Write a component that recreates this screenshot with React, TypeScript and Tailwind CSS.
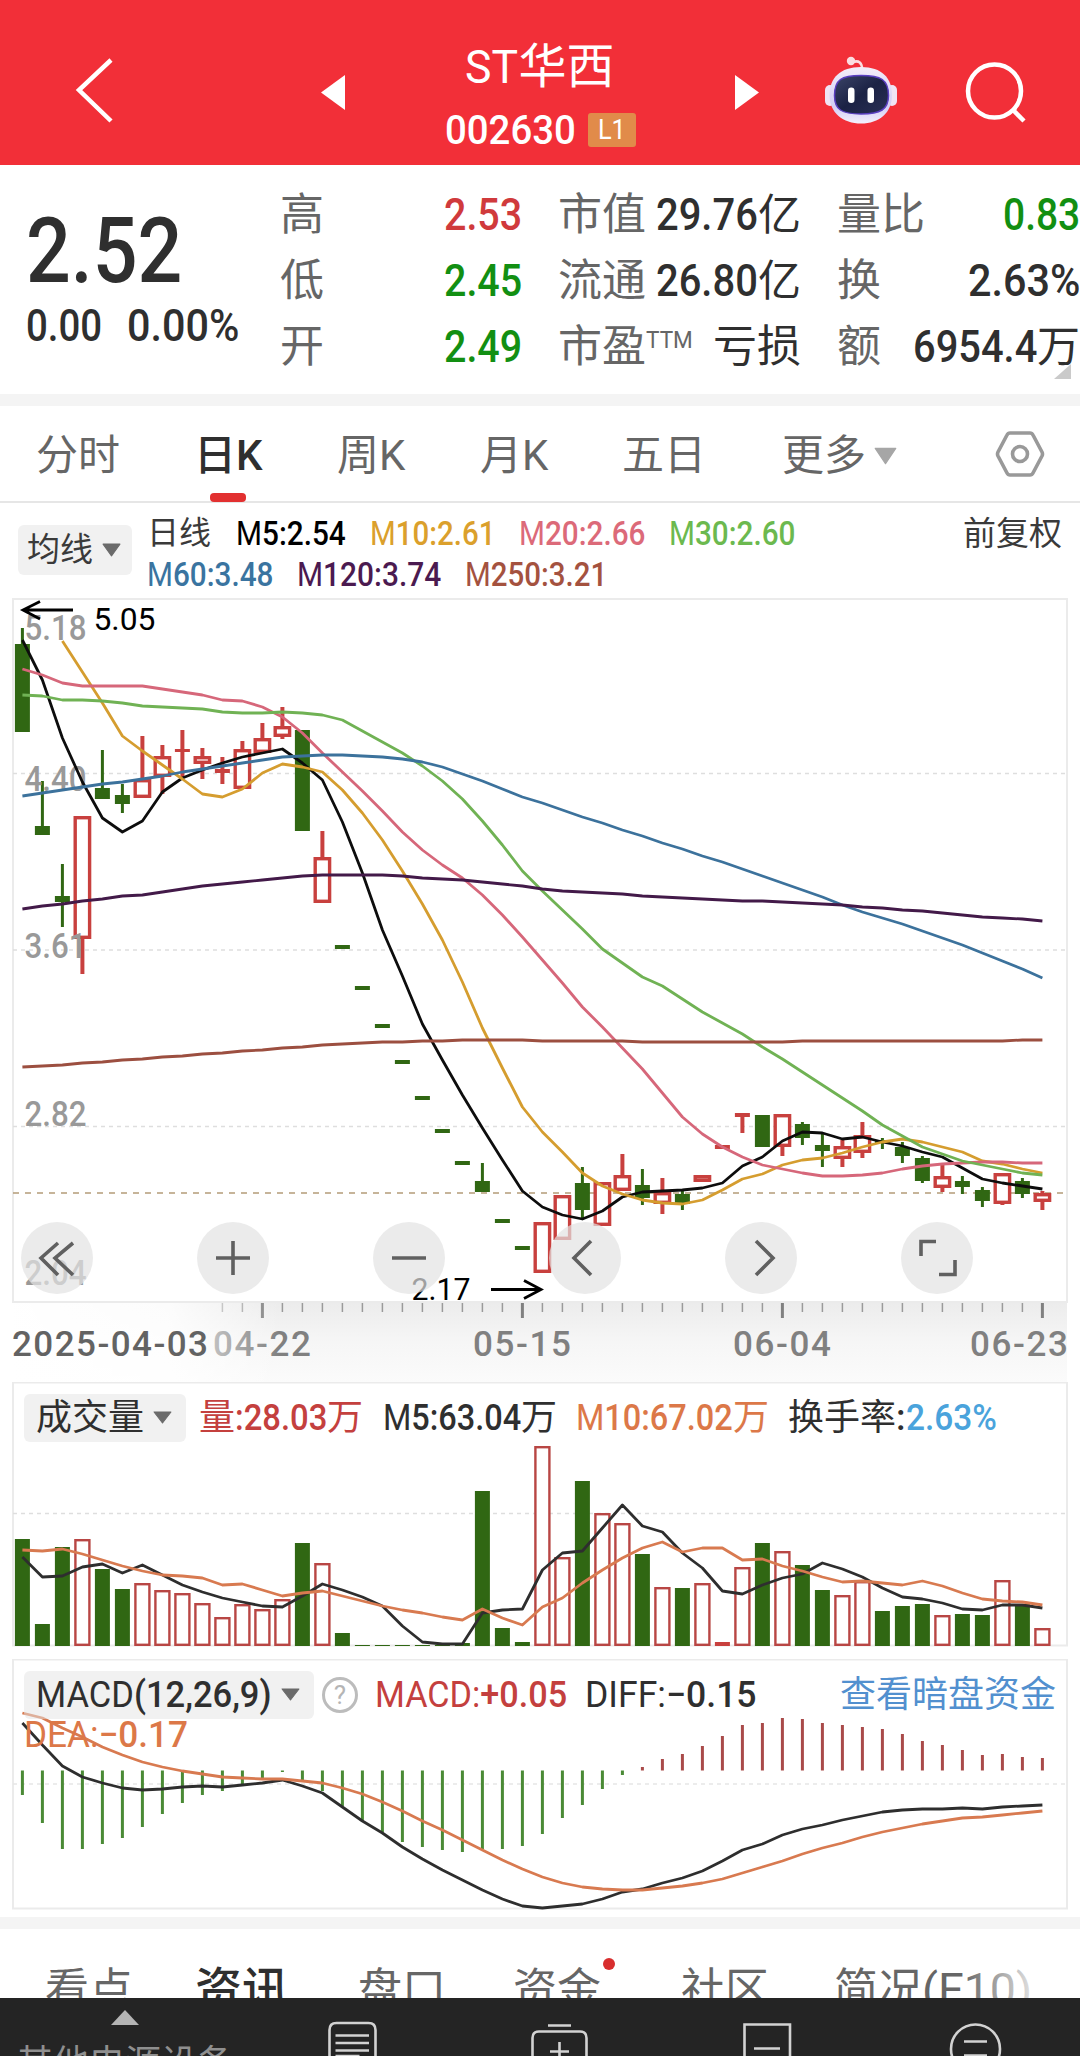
import { useLayoutEffect, useRef, useState } from "react";
import type { ReactNode } from "react";

type Candle = {
  up: boolean;
  top: number;
  bottom: number;
  high?: number;
  low?: number;
};

const STEP = 20;
const FIRST_X = 22.4;
const xAt = (i: number) => FIRST_X + i * STEP;

const g = (top: number, bottom: number, high?: number, low?: number): Candle => ({ up: false, top, bottom, high, low });
const r = (top: number, bottom: number, high?: number, low?: number): Candle => ({ up: true, top, bottom, high, low });

const candles: Candle[] = [
  g(644, 732, 628), g(826, 835, 781), g(896, 902, 864, 927), r(816, 939, undefined, 974),
  g(788, 799, 750), g(795, 804, 784, 813), r(779, 798, 736), r(756, 777, 745, 794),
  r(749, 752, 730, 777), r(756, 764, 748, 779), r(769, 773, 757, 784), r(749, 789, 741),
  r(738, 753, 723), r(726, 737, 707, 739), g(730, 831), r(857, 903, 831),
  g(945, 949), g(986, 990), g(1024, 1028), g(1060, 1064), g(1096, 1100), g(1129, 1133), g(1161, 1165),
  g(1181, 1192, 1163), g(1219, 1223), g(1246, 1250), r(1222, 1273), r(1195, 1240),
  g(1183, 1210, 1167, 1218), r(1182, 1226), r(1175, 1191, 1154), g(1185, 1198, 1169, 1205),
  r(1192, 1204, 1178, 1214), g(1194, 1204, 1190, 1210), r(1175, 1182), r(1145, 1149),
  r(1113, 1117, undefined, 1133), g(1115, 1147), r(1114, 1147, undefined, 1156), g(1124, 1138, 1122, 1145),
  g(1145, 1151, 1134, 1167), r(1146, 1159, 1140, 1167), r(1135, 1153, 1122, 1158), g(1140, 1143, 1138, 1149),
  g(1147, 1156, 1142, 1163), g(1158, 1181, 1156, 1183), r(1176, 1188, 1165, 1192), g(1181, 1187, 1176, 1194),
  g(1190, 1201, 1187, 1207), r(1173, 1204, undefined, 1205), g(1181, 1194, 1178, 1198), r(1193, 1202, 1191, 1210),
];

const ma5 = [
  640, 680, 738, 782, 818, 832, 821, 792, 778, 770, 763, 757, 753, 749, 763, 780, 822, 873, 930, 976, 1024, 1060, 1095,
  1128, 1160, 1191, 1207, 1215, 1219, 1211, 1197, 1192, 1191, 1190, 1188, 1183, 1166, 1157, 1141, 1132, 1133, 1139,
  1137, 1142, 1146, 1152, 1157, 1168, 1179, 1183, 1186, 1189,
];
const ma10 = [
  641, 672, 703, 736, 751, 765, 779, 794, 797, 789, 773, 764, 767, 772, 790, 813, 840, 871, 904, 940, 982, 1028, 1068,
  1107, 1132, 1152, 1173, 1186, 1194, 1200, 1203, 1204, 1200, 1190, 1179, 1174, 1165, 1160, 1158, 1153, 1147, 1142,
  1139, 1142, 1147, 1152, 1161, 1164, 1169, 1173,
];
const ma20 = [
  669, 675, 683, 686, 686, 686, 686, 689, 692, 695, 700, 701, 707, 717, 733, 753, 772, 791, 811, 832, 850, 865, 878,
  895, 915, 937, 960, 983, 1007, 1027, 1048, 1069, 1093, 1117, 1134, 1147, 1157, 1165, 1169, 1173, 1176, 1176, 1175,
  1173, 1169, 1166, 1164, 1163, 1162, 1162, 1163, 1163,
];
const ma30 = [
  695, 696, 700, 700, 701, 703, 706, 707, 708, 709, 712, 713, 713, 712, 713, 715, 720, 731, 742, 753, 766, 781, 799,
  821, 845, 871, 891, 910, 929, 949, 963, 977, 986, 999, 1012, 1023, 1034, 1047, 1059, 1072, 1085, 1098, 1111, 1125,
  1136, 1147, 1154, 1161, 1165, 1169, 1173, 1175,
];
const ma60 = [
  796, 793, 790, 787, 784, 782, 779, 776, 772, 769, 766, 763, 760, 757, 756, 755, 755, 756, 757, 759, 762, 767, 774,
  781, 789, 797, 803, 810, 817, 823, 830, 836, 843, 849, 856, 862, 869, 876, 883, 890, 897, 905, 912, 918, 924, 931,
  938, 945, 953, 961, 969, 978,
];
const ma120 = [
  909, 906, 904, 901, 899, 896, 895, 892, 889, 886, 884, 882, 880, 878, 876, 875, 875, 875, 875, 876, 878, 879, 880,
  882, 884, 886, 889, 891, 892, 893, 894, 896, 897, 898, 899, 900, 901, 901, 902, 903, 904, 905, 907, 908, 910, 911,
  913, 915, 917, 918, 919, 921,
];
const ma250 = [
  1067, 1066, 1065, 1063, 1062, 1060, 1059, 1057, 1056, 1054, 1053, 1051, 1050, 1048, 1047, 1045, 1044, 1043, 1042,
  1042, 1041, 1041, 1040, 1040, 1040, 1040, 1041, 1041, 1041, 1041, 1041, 1042, 1042, 1042, 1042, 1042, 1042, 1042,
  1042, 1041, 1041, 1041, 1041, 1041, 1041, 1041, 1041, 1041, 1041, 1041, 1040, 1040,
];

const volumeTops = [
  1539, 1624, 1547, 1539, 1569, 1589, 1583, 1590, 1593, 1603, 1617, 1604, 1609, 1599, 1543, 1563, 1633, 1645, 1645,
  1645, 1645, 1645, 1643, 1491, 1628, 1642, 1446, 1557, 1481, 1513, 1523, 1554, 1587, 1588, 1583, 1642, 1567, 1543,
  1551, 1565, 1590, 1595, 1581, 1611, 1606, 1604, 1615, 1614, 1615, 1580, 1604, 1628,
];
const vol5 = [
  1557, 1577, 1576, 1567, 1564, 1573, 1565, 1575, 1585, 1592, 1598, 1602, 1606, 1607, 1596, 1584, 1590, 1597, 1606,
  1626, 1642, 1644, 1644, 1613, 1610, 1609, 1570, 1553, 1551, 1528, 1505, 1526, 1532, 1553, 1568, 1591, 1594, 1585,
  1578, 1574, 1563, 1569, 1577, 1588, 1597, 1599, 1603, 1609, 1610, 1605, 1605, 1608,
];
const vol10 = [
  1550, 1551, 1549, 1554, 1560, 1566, 1571, 1575, 1576, 1578, 1585, 1584, 1590, 1596, 1593, 1591, 1596, 1601, 1606,
  1610, 1613, 1617, 1620, 1609, 1618, 1625, 1607, 1598, 1583, 1570, 1558, 1548, 1542, 1552, 1548, 1548, 1560, 1559,
  1566, 1571, 1577, 1582, 1581, 1583, 1585, 1581, 1586, 1593, 1599, 1601, 1602, 1605,
];

const ZERO_Y = 1770.5;
const macdEnds = [
  1795, 1823, 1849, 1849, 1844, 1838, 1827, 1814, 1803, 1795, 1791, 1785, 1778, 1772, 1780, 1791, 1806, 1822, 1832,
  1842, 1847, 1850, 1852, 1849, 1849, 1846, 1834, 1818, 1805, 1789, 1775, 1767, 1759, 1754, 1746, 1736, 1725, 1723,
  1718, 1719, 1723, 1725, 1727, 1729, 1734, 1741, 1745, 1750, 1755, 1754, 1757, 1758,
];
const diff = [
  1723, 1745, 1766, 1777, 1783, 1788, 1790, 1789, 1787, 1786, 1787, 1785, 1783, 1780, 1786, 1793, 1807, 1821, 1833,
  1847, 1859, 1870, 1880, 1890, 1899, 1906, 1908, 1906, 1904, 1899, 1892, 1889, 1883, 1878, 1871, 1861, 1850, 1844,
  1835, 1829, 1825, 1820, 1816, 1812, 1810, 1809, 1809, 1808, 1809, 1807, 1806, 1805,
];
const dea = [
  1713, 1718, 1728, 1737, 1747, 1755, 1762, 1767, 1771, 1774, 1777, 1778, 1779, 1779, 1781, 1783, 1788, 1794, 1802,
  1811, 1821, 1830, 1840, 1850, 1860, 1869, 1877, 1883, 1887, 1889, 1890, 1890, 1888, 1886, 1883, 1879, 1873, 1867,
  1861, 1854, 1848, 1843, 1837, 1832, 1828, 1824, 1821, 1818, 1817, 1815, 1813, 1811,
];

const RED = "#c8403e";
const GREEN = "#306713";

// Condenses its text to the given width, the way a DIN face would set it.
function Fit({ w, className = "", children }: { w: number; className?: string; children: ReactNode }) {
  const ref = useRef<HTMLSpanElement>(null);
  const [scale, setScale] = useState(1);
  useLayoutEffect(() => {
    if (ref.current) setScale(w / ref.current.offsetWidth);
  }, [w]);
  return (
    <span className={`inline-block shrink-0 ${className}`} style={{ width: w }}>
      <span ref={ref} className="inline-block origin-left whitespace-nowrap" style={{ transform: `scaleX(${scale})` }}>
        {children}
      </span>
    </span>
  );
}

function Line({ data, color, from = 0, width = 2.8 }: { data: number[]; color: string; from?: number; width?: number }) {
  const points = data.map((y, i) => `${xAt(i + from)},${y}`).join(" ");
  return <polyline points={points} fill="none" stroke={color} strokeWidth={width} strokeLinejoin="round" />;
}

function Frame({ y, h }: { y: number; h: number }) {
  return <rect x="13" y={y} width="1054" height={h} fill="none" stroke="#ebebeb" strokeWidth="2" />;
}

function Grid({ y, color = "#dedede", dash = "4 4" }: { y: number; color?: string; dash?: string }) {
  return <line x1="13" x2="1066" y1={y} y2={y} stroke={color} strokeWidth="1.4" strokeDasharray={dash} />;
}

function Caret({ className }: { className: string }) {
  return (
    <svg viewBox="0 0 18 13" preserveAspectRatio="none" className={className}>
      <path d="M1 1h16L9 12z" fill="currentColor" stroke="currentColor" strokeLinejoin="round" />
    </svg>
  );
}

function Header() {
  return (
    <header className="flex h-[165px] bg-[#f22f38] text-white">
      <svg viewBox="0 0 345 165" className="h-[165px] w-[345px]">
        <path d="M111 60 79 90l32 31" fill="none" stroke="white" strokeWidth="4.500" />
        <path d="M345 75v35l-24-17.500z" fill="white" />
      </svg>
      <div className="flex w-[390px] flex-col items-center pt-[39px]">
        <div className="flex h-[56px] items-center text-[47px] leading-[56px]">
          <Fit w={53}>ST</Fit>
          <span className="text-[48px]">华西</span>
        </div>
        <div className="mt-[10px] flex h-[54px] items-center pb-1 text-[41px] leading-[50px] font-medium">
          <Fit w={131}>002630</Fit>
          <span className="ml-[12px] flex h-[34px] w-[48px] items-center justify-center rounded-[3px] bg-[#e18b4a] text-[28px] leading-none font-normal">
            <Fit w={28}>L1</Fit>
          </span>
        </div>
      </div>
      <svg viewBox="735 0 345 165" className="h-[165px] w-[345px]">
        <defs>
          <linearGradient id="head" x1="0" y1="0" x2="0" y2="1">
            <stop offset="0" stopColor="#f3edf8" />
            <stop offset="0.7" stopColor="#d3cdf5" />
            <stop offset="1" stopColor="#f4f0fc" />
          </linearGradient>
          <linearGradient id="visor" x1="0" y1="0" x2="1" y2="1">
            <stop offset="0" stopColor="#3b4468" />
            <stop offset="0.5" stopColor="#1b2244" />
            <stop offset="1" stopColor="#2a2f55" />
          </linearGradient>
        </defs>
        <path d="M735 75v35l24-17.500z" fill="white" />
        <path d="M853 62c6-2 9 1 9 7" fill="none" stroke="#fbdde0" strokeWidth="2.500" />
        <circle cx="851" cy="61" r="4.200" fill="#fbdde0" />
        <rect x="825" y="85" width="10" height="21" rx="5" fill="#f0e4f4" />
        <rect x="887" y="85" width="10" height="21" rx="5" fill="#f0e4f4" />
        <path d="M861 67c21 0 31 11 31 28 0 18-13 28.500-31 28.500S829.500 113 829.500 95C829.500 78 840 67 861 67z" fill="url(#head)" />
        <path
          d="M861 75.500c20 0 27.500 4 27.500 20 0 14-8 18.500-27.500 18.500s-26.500-4.500-26.500-18.500c0-16 7-20 26.500-20z"
          fill="url(#visor)"
          stroke="#5a3fc0"
          strokeWidth="1.500"
        />
        <rect x="848" y="87.500" width="6.500" height="15.500" rx="3.200" fill="white" />
        <rect x="867.500" y="87.500" width="6.500" height="15.500" rx="3.200" fill="white" />
        <circle cx="994.500" cy="91" r="26.500" fill="none" stroke="white" strokeWidth="4.500" />
        <path d="m1013 110 11 11" stroke="white" strokeWidth="4.500" />
      </svg>
    </header>
  );
}

function Cell({ label, children }: { label: ReactNode; children: ReactNode }) {
  return (
    <div className="flex items-center justify-between">
      <span className="text-[#666]">{label}</span>
      <span className="flex items-center text-[45px] font-medium text-[#2f2f2f]">{children}</span>
    </div>
  );
}

function Quote() {
  return (
    <section className="relative flex h-[229px] bg-white pt-[17px] text-[44px] leading-[66px]">
      <div className="w-[280px] pl-[26px] font-medium text-[#2f2f2f]">
        <div className="pt-[33px] text-[90px] leading-[74px]">
          <Fit w={156}>2.52</Fit>
        </div>
        <div className="flex pt-[4px] text-[45px]">
          <Fit w={76}>0.00</Fit>
          <Fit w={112} className="ml-[25px]">0.00%</Fit>
        </div>
      </div>
      <div className="w-[242px]">
        <Cell label="高"><Fit w={78} className="text-[#d03a3c]">2.53</Fit></Cell>
        <Cell label="低"><Fit w={78} className="text-[#128f12]">2.45</Fit></Cell>
        <Cell label="开"><Fit w={78} className="text-[#128f12]">2.49</Fit></Cell>
      </div>
      <div className="ml-[36px] w-[243px]">
        <Cell label="市值"><Fit w={102}>29.76</Fit><span className="text-[43px] font-normal">亿</span></Cell>
        <Cell label="流通"><Fit w={102}>26.80</Fit><span className="text-[43px] font-normal">亿</span></Cell>
        <Cell label={<>市盈<Fit w={47} className="relative -top-[14px] text-[24px] leading-none">TTM</Fit></>}>
          <span className="text-[44px] font-normal">亏损</span>
        </Cell>
      </div>
      <div className="ml-[36px] w-[243px]">
        <Cell label="量比"><Fit w={77} className="text-[#128f12]">0.83</Fit></Cell>
        <Cell label="换"><Fit w={112}>2.63%</Fit></Cell>
        <Cell label="额"><Fit w={124}>6954.4</Fit><span className="text-[43px] font-normal">万</span></Cell>
      </div>
      <svg viewBox="0 0 17 15" className="absolute top-[199px] left-[1054px] h-[15px] w-[17px]">
        <path d="M17 0v15H0z" fill="#cacaca" />
      </svg>
    </section>
  );
}

function PeriodTabs() {
  return (
    <nav className="flex h-[97px] items-start border-b-2 border-[#e6e6e6] bg-white pt-[20px] pl-[36px] text-[42px] leading-[60px] text-[#666]">
      <span className="w-[158px]">分时</span>
      <span className="relative w-[143px] font-medium text-[#2f2f2f]">
        日<Fit w={27}>K</Fit>
        <i className="absolute top-[67px] left-[16px] h-[9px] w-[36px] rounded-[4px] bg-[#e23030]" />
      </span>
      <span className="w-[143px]">周<Fit w={26}>K</Fit></span>
      <span className="w-[142px]">月<Fit w={26}>K</Fit></span>
      <span className="w-[160px]">五日</span>
      <span className="flex w-[213px] items-center">
        更多
        <Caret className="ml-[8px] h-[18px] w-[23px] text-[#a6a6a6]" />
      </span>
      <svg viewBox="0 0 50 46" className="mt-[5px] h-[46px] w-[50px]" fill="none" stroke="#999" strokeWidth="3.600">
        <path d="M15 2h20q2 0 3 2l9 17q1 2 0 4l-9 17q-1 2-3 2H15q-2 0-3-2L3 25q-1-2 0-4l9-17q1-2 3-2z" />
        <circle cx="25" cy="23" r="7.500" />
      </svg>
    </nav>
  );
}

const averages = [
  [
    { name: "M5", value: ":2.54", w: 110, color: "text-black" },
    { name: "M10", value: ":2.61", w: 125, color: "text-[#dba02c]" },
    { name: "M20", value: ":2.66", w: 126, color: "text-[#dc6a79]" },
    { name: "M30", value: ":2.60", w: 126, color: "text-[#6cb94f]" },
  ],
  [
    { name: "M60", value: ":3.48", w: 126, color: "text-[#3a74a0]" },
    { name: "M120", value: ":3.74", w: 144, color: "text-[#4b1a50]" },
    { name: "M250", value: ":3.21", w: 142, color: "text-[#a4523f]" },
  ],
];

function Average({ name, value, w, color }: { name: string; value: string; w: number; color: string }) {
  return (
    <Fit w={w} className={`font-medium ${color}`}>
      <span className="font-normal">M</span>
      {name.slice(1)}
      {value}
    </Fit>
  );
}

function AverageBar() {
  return (
    <div className="flex h-[95px] bg-white pt-[10px] pr-[18px] pl-[18px] text-[33px] text-[#3a3a3a]">
      <div className="mt-[12px] flex h-[50px] w-[114px] items-center rounded-[6px] bg-[#f1f1f1] pl-[9px] leading-[50px]">
        均线
        <Caret className="ml-[9px] h-[14px] w-[19px] text-[#6b6b6b]" />
      </div>
      <div className="ml-[15px] flex-1 text-[33px] leading-[41px]">
        <div className="flex gap-[24px]">
          <span className="w-[65px] text-[32px]">日线</span>
          {averages[0].map((a) => <Average key={a.name} {...a} />)}
        </div>
        <div className="flex gap-[24px]">
          {averages[1].map((a) => <Average key={a.name} {...a} />)}
        </div>
      </div>
      <span className="leading-[41px]">前复权</span>
    </div>
  );
}

function CandleShape({ c, i }: { c: Candle; i: number }) {
  const x = xAt(i);
  const color = c.up ? RED : GREEN;
  const h = c.bottom - c.top;
  return (
    <g stroke={color}>
      {c.high && <line x1={x} x2={x} y1={c.high} y2={c.top} strokeWidth={c.up ? 4 : 3} />}
      {c.low && <line x1={x} x2={x} y1={c.bottom} y2={c.low} strokeWidth={c.up ? 4 : 3} />}
      {c.up && h > 4 ? (
        <rect x={x - 7.2} y={c.top + 1.7} width="14.4" height={h - 3.4} fill="white" strokeWidth="3.400" />
      ) : (
        <rect x={x - 7.500} y={c.top} width="15" height={h} fill={color} stroke="none" />
      )}
    </g>
  );
}

const priceLabels = [
  { text: "5.18", y: 640 },
  { text: "4.40", y: 790.5 },
  { text: "3.61", y: 958 },
  { text: "2.82", y: 1126 },
  { text: "2.04", y: 1285 },
];

const tools = [
  "M37 21 20 36l17 17M52 21 34 36l18 17",
  "M19 36h34M36 19v34",
  "M19 36h34",
  "M42 19 25 36l17 17",
  "M31 19l17 17-17 17",
  "M20 34V19.500h15M54 38v14.500H38",
];

function PriceChart() {
  return (
    <div className="relative h-[705px] bg-white">
      <svg viewBox="0 598 1080 705" className="h-[705px] w-full">
        <Frame y={599} h={703} />
        <Grid y={773.5} />
        <Grid y={950} />
        <Grid y={1126.5} />
        <Grid y={1193} color="#b49c78" dash="6 6" />
        {candles.map((c, i) => <CandleShape key={i} c={c} i={i} />)}
        <g fill="#999" fontSize="35" fontWeight="500">
          {priceLabels.map((p) => (
            <text key={p.text} x="24.500" y={p.y} textLength="62" lengthAdjust="spacingAndGlyphs">{p.text}</text>
          ))}
        </g>
        <Line data={ma5} color="#0d0d0d" />
        <Line data={ma10} color="#d59d2f" from={2} />
        <Line data={ma20} color="#d6677a" />
        <Line data={ma30} color="#70b254" />
        <Line data={ma60} color="#3c729c" />
        <Line data={ma120} color="#431a49" />
        <Line data={ma250} color="#9c4f40" />
        <g fill="none" stroke="black" strokeWidth="2.800">
          <path d="M73 610H23M40 601.500 23 610l17 9" />
          <path d="M491 1289.500h50M524 1280.500l17 9-17 9" />
        </g>
        <g fill="black" fontSize="31">
          <text x="93.500" y="629.500" textLength="62" lengthAdjust="spacingAndGlyphs">5.05</text>
          <text x="411.500" y="1300" textLength="59" lengthAdjust="spacingAndGlyphs">2.17</text>
        </g>
      </svg>
      <div className="absolute top-[624px] left-[21px] flex gap-[104px]">
        {tools.map((d) => (
          <span key={d} className="h-[72px] w-[72px] rounded-full bg-[#e3e3e3]/70">
            <svg viewBox="0 0 72 72" fill="none" stroke="#606060" strokeWidth="3.600">
              <path d={d} />
            </svg>
          </span>
        ))}
      </div>
    </div>
  );
}

function DateAxis() {
  const ticks = Array.from({ length: 42 }, (_, i) => i + 10);
  return (
    <div className="h-[79px] bg-white">
      <svg viewBox="0 1303 1080 79" className="h-[79px] w-full">
        <defs>
          <linearGradient id="shade" x1="0" y1="0" x2="0" y2="1">
            <stop offset="0" stopColor="#ececec" />
            <stop offset="0.5" stopColor="#f6f6f6" />
            <stop offset="1" stopColor="#fbfbfb" />
          </linearGradient>
          <linearGradient id="fade" x1="0" y1="0" x2="1" y2="0">
            <stop offset="0" stopColor="white" />
            <stop offset="0.6" stopColor="white" stopOpacity="0.85" />
            <stop offset="1" stopColor="white" stopOpacity="0" />
          </linearGradient>
        </defs>
        <rect x="13" y="1303" width="1054" height="79" fill="url(#shade)" />
        {ticks.map((i) => {
          const major = (i - 12) % 13 === 0;
          return (
            <line
              key={i}
              x1={xAt(i)}
              x2={xAt(i)}
              y1="1303"
              y2={major ? 1318 : 1312}
              stroke={major ? "#808080" : "#9a9a9a"}
              strokeWidth={major ? 3 : 1.5}
            />
          );
        })}
        <g fill="#808080" fontSize="35" fontWeight="500">
          <text x="213" y="1356" textLength="98">04-22</text>
          <text x="473" y="1356" textLength="98">05-15</text>
          <text x="733" y="1356" textLength="98">06-04</text>
          <text x="970" y="1356" textLength="98">06-23</text>
        </g>
        <rect x="0" y="1303" width="280" height="79" fill="url(#fade)" />
        <text x="12" y="1356" textLength="196" fill="#636363" fontSize="35" fontWeight="500">
          2025-04-03
        </text>
      </svg>
    </div>
  );
}

function VolumePanel() {
  return (
    <div className="relative h-[277px] bg-white">
      <svg viewBox="0 1382 1080 277" className="absolute inset-0 h-[277px] w-full">
        <Frame y={1382.5} h={263} />
        <Grid y={1513.5} />
        {volumeTops.map((top, i) => {
          const x = xAt(i);
          return candles[i].up && top < 1640 ? (
            <rect key={i} x={x - 7} y={top + 1.2} width="14" height={1646 - top - 2.4} fill="white" stroke="#b84644" strokeWidth="2.400" />
          ) : (
            <rect key={i} x={x - 7.500} y={top} width="15" height={1646 - top} fill={candles[i].up ? RED : GREEN} />
          );
        })}
        <Line data={vol5} color="#2e2e2e" />
        <Line data={vol10} color="#d87a50" />
      </svg>
      <div className="relative flex h-[70px] items-center pt-px pl-[24px] text-[36px] leading-[48px] font-medium text-[#2f2f2f]">
        <div className="flex h-[48px] w-[162px] items-center rounded-[6px] bg-[#f1f1f1] pl-[12px] font-normal">
          成交量
          <Caret className="ml-[9px] h-[13px] w-[19px] text-[#6b6b6b]" />
        </div>
        <span className="ml-[13px] flex text-[#c4403e]">
          <span className="font-normal">量</span><Fit w={92}>:28.03</Fit><span className="font-normal">万</span>
        </span>
        <span className="ml-[20px] flex">
          <Fit w={138}><span className="font-normal">M</span>5:63.04</Fit><span className="font-normal">万</span>
        </span>
        <span className="ml-[19px] flex text-[#dc7848]">
          <Fit w={157}><span className="font-normal">M</span>10:67.02</Fit><span className="font-normal">万</span>
        </span>
        <span className="ml-[19px] flex">
          <span className="font-normal">换手率</span><Fit w={10}>:</Fit>
          <Fit w={91} className="text-[#4aa3dc]">2.63%</Fit>
        </span>
      </div>
    </div>
  );
}

function MacdPanel() {
  return (
    <div className="relative h-[258px] bg-white">
      <svg viewBox="0 1659 1080 258" className="absolute inset-0 h-[258px] w-full">
        <Frame y={1659.5} h={249} />
        <Grid y={1784} color="#e6e6e6" />
        {macdEnds.map((y, i) => (
          <line key={i} x1={xAt(i)} x2={xAt(i)} y1={ZERO_Y} y2={y} stroke={y > ZERO_Y ? "#4a8a35" : "#a94a49"} strokeWidth="3" />
        ))}
        <Line data={diff} color="#2e2e2e" />
        <Line data={dea} color="#d87a50" />
      </svg>
      <div className="relative flex h-[70px] items-center pt-px pr-[24px] pl-[24px] text-[36px] leading-[48px] text-[#2f2f2f]">
        <div className="flex h-[48px] w-[290px] items-center rounded-[6px] bg-[#e4e4e4]/50 pl-[12px]">
          <Fit w={236}>MACD<span className="font-medium">(12,26,9)</span></Fit>
          <Caret className="ml-[9px] h-[13px] w-[19px] text-[#6b6b6b]" />
        </div>
        <span className="ml-[8px] flex h-[36px] w-[36px] items-center justify-center rounded-full border-[3px] border-[#bcbcbc] text-[26px] leading-none text-[#b5b5b5]">
          ?
        </span>
        <Fit w={192} className="ml-[17px] text-[#c4403e]">MACD:<span className="font-medium">+0.05</span></Fit>
        <Fit w={172} className="ml-[18px]">DIFF:<span className="font-medium">−0.15</span></Fit>
        <span className="ml-auto text-[#5290cf]">查看暗盘资金</span>
      </div>
      <div className="relative -mt-[18px] pl-[24px] text-[36px] leading-[48px] text-[#dc7848]">
        <Fit w={164}>DEA:<span className="font-medium">−0.17</span></Fit>
      </div>
    </div>
  );
}

function InfoTabs() {
  return (
    <nav className="flex h-[69px] items-start overflow-hidden bg-white pt-[31px] pl-[45px] text-[44px] leading-[60px] whitespace-nowrap text-[#666]">
      <span className="w-[150px]">看点</span>
      <span className="w-[163px] text-[47px] font-medium text-[#2f2f2f]">资讯</span>
      <span className="w-[155px]">盘口</span>
      <span className="relative w-[168px]">
        资金
        <i className="absolute -top-[2px] left-[90px] h-[12px] w-[12px] rounded-full bg-[#d82e2e]" />
      </span>
      <span className="w-[153px]">社区</span>
      <span className="relative">
        简况<Fit w={110}>(F10)</Fit>
        <i className="absolute inset-y-0 right-0 w-[70px] bg-gradient-to-r from-white/0 to-white/80" />
      </span>
    </nav>
  );
}

function BottomBar() {
  return (
    <footer className="flex h-[58px] items-start overflow-hidden bg-[#242424] text-[#b0b0b0]">
      <div className="flex w-[300px] flex-col pl-[17px]">
        <svg viewBox="0 0 28 15" className="mt-[12px] ml-[94px] h-[15px] w-[28px] shrink-0">
          <path d="M14 0l14 15H0z" fill="#b4b4b4" />
        </svg>
        <span className="mt-[14px] text-[36px] leading-[50px] whitespace-nowrap text-[#8f8f8f]">其他电源设备</span>
      </div>
      <svg viewBox="300 1998 780 58" className="h-[58px] w-[780px]" fill="none" stroke="#d2d2d2" strokeWidth="2.600">
        <path d="M329.500 2060v-30q0-7 7-7h32q7 0 7 7v30M335.500 2035.500h33.500M335.500 2043h33.500M335.500 2050.500h33.500M335.500 2056h24" />
        <path d="M548 2025.500h23M532.500 2060v-22q0-6.500 6.500-6.500h41q6.500 0 6.500 6.500v22M550 2051.500h19M559.500 2042v18" />
        <path d="M744.500 2060v-35.500h45.500v35.500M754 2048.500h26" />
        <circle cx="975.500" cy="2049" r="24.500" />
        <path d="M964 2041.500h23M964 2055.500h23" />
      </svg>
    </footer>
  );
}

export default function App() {
  return (
    <div className="h-[2056px] w-[1080px] overflow-hidden bg-white [font-family:Roboto,'Noto_Sans_CJK_SC',sans-serif]">
      <Header />
      <Quote />
      <div className="h-[12px] bg-[#f4f4f4]" />
      <PeriodTabs />
      <AverageBar />
      <PriceChart />
      <DateAxis />
      <VolumePanel />
      <MacdPanel />
      <div className="h-[12px] bg-[#f4f4f4]" />
      <InfoTabs />
      <BottomBar />
    </div>
  );
}
